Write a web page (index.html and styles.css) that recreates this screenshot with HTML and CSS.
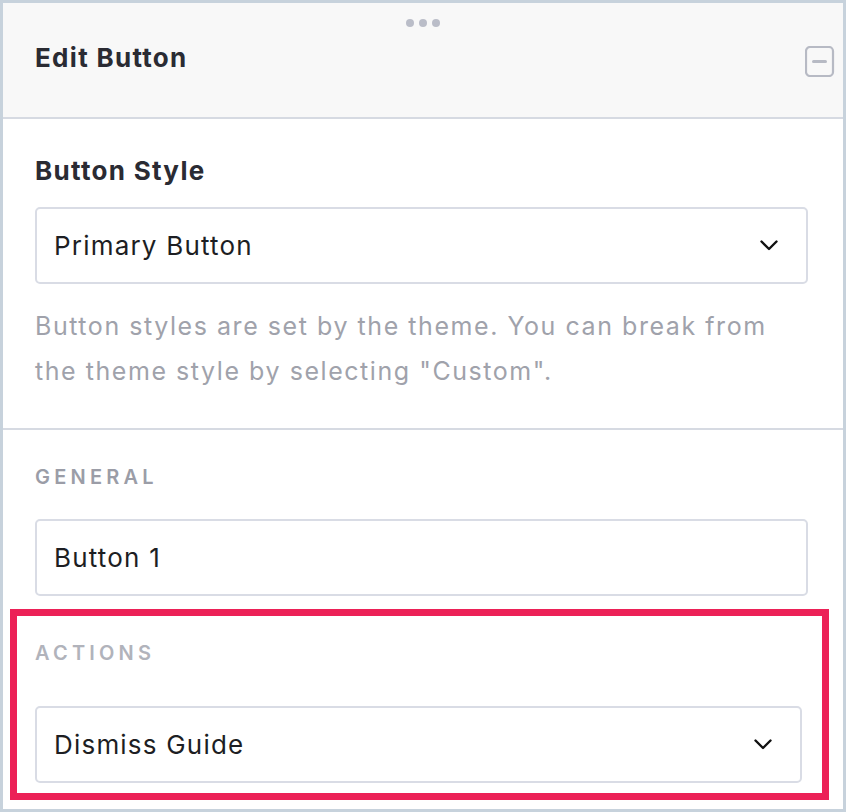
FILE: index.html
```html
<!DOCTYPE html>
<html>
<head>
<meta charset="utf-8">
<link rel="stylesheet" href="styles.css">
</head>
<body>
<div class="panel">
  <div class="header">
    <div class="grip"><span></span><span></span><span></span></div>
    <div class="header-row">
      <h1 class="title">Edit Button</h1>
      <svg class="minimize" width="30" height="31" viewBox="0 0 30 31">
        <rect x="1" y="1" width="27" height="29" rx="4" fill="none" stroke="#b7bac4" stroke-width="2.2"/>
        <line x1="8.5" y1="15.5" x2="20.5" y2="15.5" stroke="#b7bac4" stroke-width="3" stroke-linecap="round"/>
      </svg>
    </div>
  </div>
  <div class="section style-section">
    <div class="label">Button Style</div>
    <div class="field select">
      <span>Primary Button</span>
      <svg class="chev" width="18" height="11" viewBox="0 0 18 11"><polyline points="1.5,1.5 9,9 16.5,1.5" fill="none" stroke="#111" stroke-width="2.4" stroke-linecap="round" stroke-linejoin="round"/></svg>
    </div>
    <p class="help">Button styles are set by the theme. You can break from the theme style by selecting "Custom".</p>
  </div>
  <div class="section general-section">
    <div class="caps">GENERAL</div>
    <div class="field"><span>Button 1</span></div>
  </div>
  <div class="actions">
    <div class="caps light">ACTIONS</div>
    <div class="field select">
      <span>Dismiss Guide</span>
      <svg class="chev" width="18" height="11" viewBox="0 0 18 11"><polyline points="1.5,1.5 9,9 16.5,1.5" fill="none" stroke="#111" stroke-width="2.4" stroke-linecap="round" stroke-linejoin="round"/></svg>
    </div>
  </div>
</div>
</body>
</html>
```
FILE: styles.css
```css
* { box-sizing: border-box; }
html, body { margin: 0; padding: 0; background: #fff; }
body { font-family: Inter, "Open Sans", sans-serif; color: #25262c; }
.panel {
  width: 846px;
  height: 812px;
  border: 3px solid #c7d2dc;
  background: #fff;
  display: flex;
  flex-direction: column;
}
.header {
  background: #f8f8f8;
  height: 116px;
  border-bottom: 2px solid #d6dae2;
  padding: 16px 0 0 32px;
}
.grip {
  display: flex;
  justify-content: center;
  gap: 5px;
  margin-left: -32px;
  height: 8px;
}
.grip span {
  width: 8px;
  height: 8px;
  border-radius: 50%;
  background: #babdc8;
}
.header-row {
  display: flex;
  align-items: center;
  justify-content: space-between;
  padding-right: 8px;
  margin-top: 12px;
}
.title {
  margin: 0;
  font-size: 26px;
  font-weight: 700;
  letter-spacing: 1.3px;
  line-height: 32px;
  color: #2a2b33;
}
.minimize { display: block; margin-top: 7px; }
.section {
  padding: 0 35px 0 32px;
  border-bottom: 2px solid #d6dae2;
}
.style-section { padding-top: 36px; padding-bottom: 34px; }
.label {
  font-size: 26px;
  font-weight: 700;
  letter-spacing: 1.3px;
  line-height: 32px;
  color: #2a2b33;
  margin-bottom: 20px;
}
.field {
  height: 77px;
  border: 2px solid #d9dce5;
  border-radius: 5px;
  display: flex;
  align-items: center;
  justify-content: space-between;
  padding: 0 28px 0 17px;
  font-size: 26px;
  letter-spacing: 1.2px;
  color: #1d1e23;
}
.field .chev { display: block; }
.help {
  margin: 20px 0 0;
  font-size: 25px;
  line-height: 45px;
  letter-spacing: 1.55px;
  color: #a0a2ab;
}
.general-section { border-bottom: none; padding-top: 35px; padding-bottom: 13px; }
.caps {
  font-size: 20px;
  font-weight: 600;
  letter-spacing: 4.2px;
  line-height: 24px;
  color: #9b9da7;
  margin-bottom: 30px;
}
.caps.light { color: #b1b3bb; margin-bottom: 41px; }
.actions {
  margin: 0 14px 0 7px;
  border: 7px solid #ec2157;
  padding: 25px 20px 10px 18px;
}
.actions .field { padding-right: 28px; }
```
